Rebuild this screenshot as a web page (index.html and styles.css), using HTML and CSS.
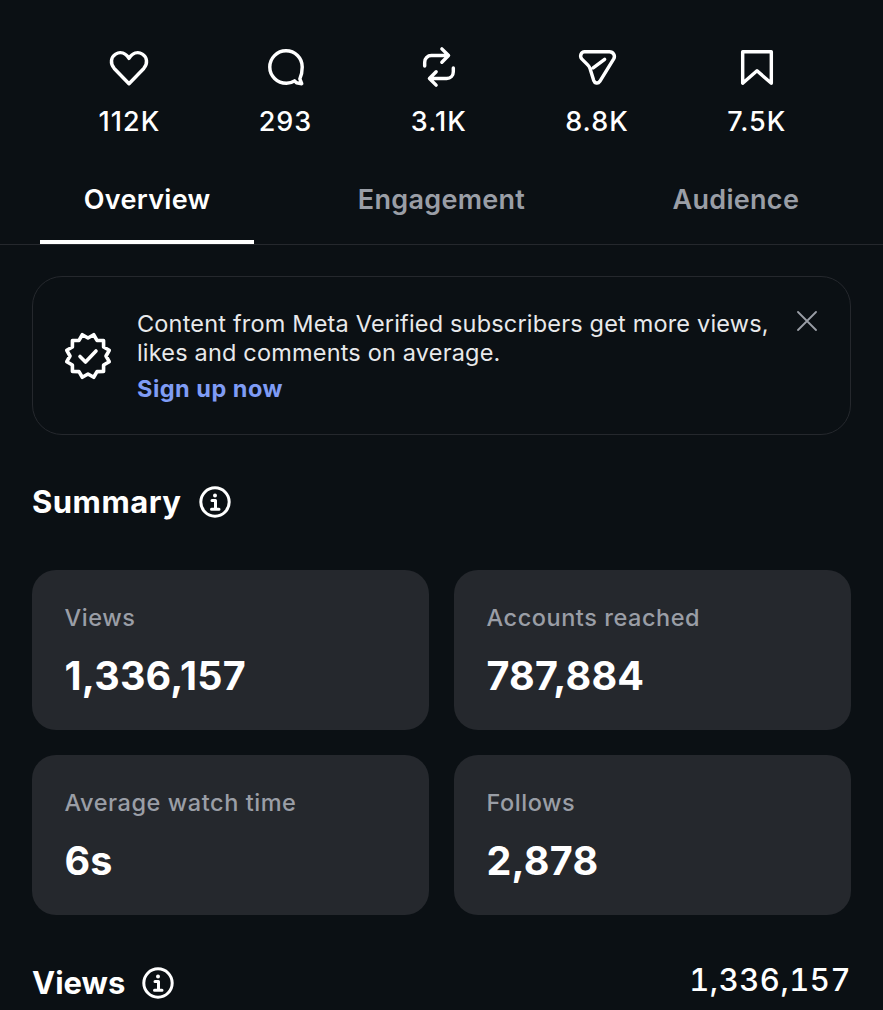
FILE: index.html
```html
<!DOCTYPE html>
<html lang="en">
<head>
  <meta charset="UTF-8">
  <meta name="viewport" content="width=device-width, initial-scale=1.0">
  <title>Insights</title>
  <link rel="stylesheet" href="styles.css">
</head>
<body>
  <div class="page">
    <div class="stats">
      <div class="stat">
        <svg class="stat-icon" viewBox="0 0 44 44"><path d="M22 39.500 6.500 23.500C2 18.500 3 11.500 8 8.500c5-3 10.500-1 14 4.500 3.500-5.500 9-7.500 14-4.500 5 3 6 10 1.500 15z"/></svg>
        <span>112K</span>
      </div>
      <div class="stat">
        <svg class="stat-icon" viewBox="0 0 44 44"><path d="M36.500 34.500 38.500 39.500 33 38.500 31 36.500C28.500 38.200 25.500 39 22.500 39 12.500 39 5 31.200 5 22S12.500 5 22 5s17 7.500 17 17c0 4.500-1 9-2.500 12.500z"/></svg>
        <span>293</span>
      </div>
      <div class="stat">
        <svg class="stat-icon" viewBox="0 0 44 44"><path d="M25 3l7 7-7 7M32 10H14c-4 0-7 3-7 7v4M19 41l-7-7 7-7M12 34h18c4 0 7-3 7-7v-4"/></svg>
        <span>3.1K</span>
      </div>
      <div class="stat">
        <svg class="stat-icon" viewBox="0 0 44 44"><path d="M9 6h26c4 0 6.500 4 4.500 7.500L25 37c-2 3-5.500 2-6.500-1L15 24.500C14.500 22.500 14 21.500 12.500 20L6 13.500C3.500 10.500 5.500 6 9 6zM18 23 30 14"/></svg>
        <span>8.8K</span>
      </div>
      <div class="stat">
        <svg class="stat-icon" viewBox="0 0 44 44"><path d="M7 6h30v33L22 26 7 39z"/></svg>
        <span>7.5K</span>
      </div>
    </div>

    <div class="tabs">
      <div class="tab active">Overview</div>
      <div class="tab">Engagement</div>
      <div class="tab">Audience</div>
    </div>

    <div class="content">
      <div class="promo">
        <svg class="promo-badge" viewBox="0 0 48 48"><path d="M42 24 45.250 29.700 39.600 33 39.560 39.560 33 39.600 29.700 45.250 24 42 18.300 45.250 15 39.600 8.440 39.560 8.400 33 2.750 29.700 6 24 2.750 18.300 8.400 15 8.440 8.440 15 8.400 18.300 2.750 24 6 29.700 2.750 33 8.400 39.560 8.440 39.600 15 45.250 18.300z"/><path d="M16 24.500 21.500 30 32 19"/></svg>
        <div class="promo-text">
          <p>Content from Meta Verified subscribers get more views, likes and comments on average.</p>
          <a class="promo-link">Sign up now</a>
        </div>
        <svg class="promo-close" viewBox="0 0 20 20"><path d="M1 1l18 18M19 1 1 19"/></svg>
      </div>

      <div class="section-title summary-title">
        <h2>Summary</h2>
        <svg class="info" viewBox="0 0 32 32"><circle cx="16" cy="16" r="14.200"/><path d="M13 14.500h3.500V23M12.500 23.200h7.500"/><circle class="dot" cx="16" cy="9.500" r="2"/></svg>
      </div>

      <div class="tiles">
        <div class="tile">
          <div class="tile-label">Views</div>
          <div class="tile-value">1,336,157</div>
        </div>
        <div class="tile">
          <div class="tile-label">Accounts reached</div>
          <div class="tile-value">787,884</div>
        </div>
        <div class="tile">
          <div class="tile-label">Average watch time</div>
          <div class="tile-value">6s</div>
        </div>
        <div class="tile">
          <div class="tile-label">Follows</div>
          <div class="tile-value">2,878</div>
        </div>
      </div>

      <div class="views-row">
        <div class="section-title">
          <h2>Views</h2>
          <svg class="info" viewBox="0 0 32 32"><circle cx="16" cy="16" r="14.200"/><path d="M13 14.500h3.500V23M12.500 23.200h7.500"/><circle class="dot" cx="16" cy="9.500" r="2"/></svg>
        </div>
        <div class="views-total">1,336,157</div>
      </div>
    </div>
  </div>
</body>
</html>
```

FILE: styles.css
```css
html, body {
  margin: 0;
  padding: 0;
  background-color: #0b1014;
}

.page {
  height: 1010px;
  overflow: hidden;
  color: #fff;
  font-family: 'Inter', sans-serif;
}

svg {
  display: block;
  fill: none;
  stroke: currentColor;
  stroke-linecap: round;
  stroke-linejoin: round;
}

.stats {
  display: flex;
  justify-content: center;
  gap: 98.500px;
  padding: 46px 0 0 2px;
}

.stat {
  display: flex;
  flex-direction: column;
  align-items: center;
  gap: 17px;
  font-size: 27px;
  font-weight: 500;
  line-height: 33px;
  letter-spacing: 1px;
}

.stat-icon {
  width: 42px;
  height: 42px;
  stroke-width: 3.600;
}

.tabs {
  display: grid;
  grid-template-columns: repeat(3, 1fr);
  height: 76px;
  margin-top: 30px;
  border-bottom: 1px solid #25282d;
}

.tab {
  justify-self: center;
  width: 214px;
  height: 76px;
  box-sizing: border-box;
  padding-top: 15px;
  text-align: center;
  color: #9a9ea6;
  font-size: 27px;
  font-weight: 600;
  line-height: 33px;
  letter-spacing: 0.300px;
}

.tab.active {
  color: #fff;
  border-bottom: 4px solid #fff;
}

.content {
  padding: 31px 32px 0;
}

.promo {
  display: flex;
  align-items: flex-start;
  height: 159px;
  box-sizing: border-box;
  padding: 32px 32px 0;
  border: 1px solid #25282d;
  border-radius: 30px;
}

.promo-badge {
  flex: none;
  width: 48px;
  height: 48px;
  margin-top: 23px;
  margin-left: -1px;
  stroke-width: 3.600;
}

.promo-text {
  flex: 1;
  margin-left: 25px;
  font-size: 23.500px;
  line-height: 29px;
  letter-spacing: 0.180px;
}

.promo-text p {
  margin: 0;
  color: #e8e9eb;
}

.promo-link {
  display: block;
  margin-top: 7px;
  color: #7f9cf5;
  font-weight: 700;
  letter-spacing: 0.500px;
}

.promo-close {
  flex: none;
  width: 20px;
  height: 20px;
  margin-top: 2px;
  margin-right: 1px;
  color: #9a9ea6;
  stroke-width: 1.800;
}

.section-title {
  display: flex;
  align-items: center;
  gap: 17px;
}

.summary-title {
  gap: 18px;
  margin-top: 49px;
}

h2 {
  margin: 0;
  font-size: 31px;
  font-weight: 700;
  line-height: 36px;
}

.summary-title h2 {
  letter-spacing: 0.500px;
}

.info {
  width: 32px;
  height: 32px;
  stroke-width: 3;
}

.info .dot {
  fill: currentColor;
  stroke: none;
}

.tiles {
  display: grid;
  grid-template-columns: repeat(2, 1fr);
  gap: 25px 25px;
  margin-top: 50px;
}

.tile {
  height: 160px;
  box-sizing: border-box;
  padding: 33px 32px 0 32.500px;
  background-color: #25282d;
  border-radius: 24px;
}

.tile-label {
  color: #9a9ea6;
  font-size: 23.500px;
  font-weight: 500;
  line-height: 29px;
  letter-spacing: 0.550px;
}

.tile-value {
  margin-top: 20px;
  font-size: 39.500px;
  font-weight: 700;
  line-height: 48px;
  letter-spacing: 0.200px;
}

.views-row {
  display: flex;
  justify-content: space-between;
  align-items: center;
  margin-top: 46px;
}

.views-total {
  margin-bottom: 6px;
  font-size: 31px;
  font-weight: 500;
  letter-spacing: 0.500px;
  font-feature-settings: "tnum";
}
```
